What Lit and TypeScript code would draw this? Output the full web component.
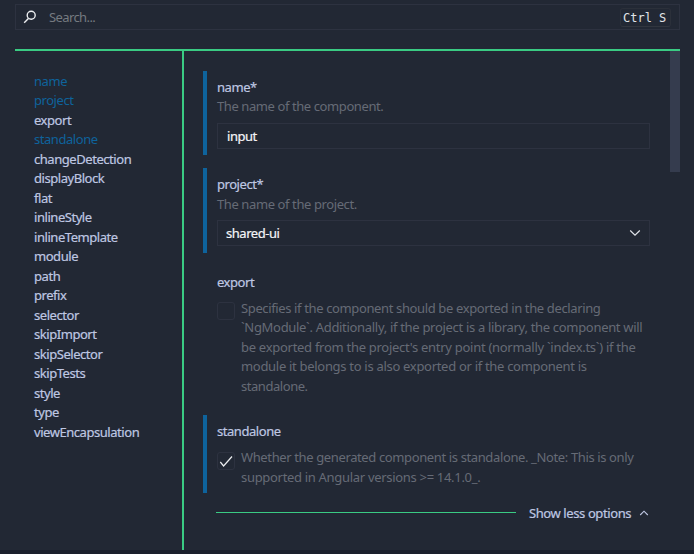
import { LitElement, html, css, svg } from "lit";
import { customElement, property } from "lit/decorators.js";
import { classMap } from "lit/directives/class-map.js";

interface NavItem {
  label: string;
  changed?: boolean;
}

const NAV: NavItem[] = [
  { label: "name", changed: true },
  { label: "project", changed: true },
  { label: "export" },
  { label: "standalone", changed: true },
  { label: "changeDetection" },
  { label: "displayBlock" },
  { label: "flat" },
  { label: "inlineStyle" },
  { label: "inlineTemplate" },
  { label: "module" },
  { label: "path" },
  { label: "prefix" },
  { label: "selector" },
  { label: "skipImport" },
  { label: "skipSelector" },
  { label: "skipTests" },
  { label: "style" },
  { label: "type" },
  { label: "viewEncapsulation" },
];

interface Line {
  text: string;
  spacing: number;
}

const lines = (items: Line[]) =>
  items.map((l) => html`<div class="line" style="letter-spacing:${l.spacing}px">${l.text}</div>`);

@customElement("option-field")
export class OptionField extends LitElement {
  @property() label = "";
  @property({ type: Boolean }) changed = false;

  static styles = css`
    :host {
      display: block;
      margin-bottom: 13px;
    }
    .field {
      padding: 7.4px 0 6.5px 10px;
      border-left: 4px solid transparent;
    }
    .changed {
      border-left-color: #0e639c;
    }
    .label {
      height: 19.5px;
      color: #bfc7e2;
      white-space: nowrap;
      -webkit-text-stroke: 0.2px;
    }
  `;

  render() {
    return html`<div class=${classMap({ field: true, changed: this.changed })}>
      <div class="label">${this.label}</div>
      <slot></slot>
    </div>`;
  }
}

@customElement("app-root")
export class AppRoot extends LitElement {
  static styles = css`
    :host {
      display: block;
      height: 554px;
      overflow: hidden;
      background: #222834;
      color: #bfc7e2;
      font: 13px/19.5px "Noto Sans", "Open Sans", sans-serif;
      letter-spacing: -0.45px;
    }
    .page {
      box-sizing: border-box;
      height: 554px;
      padding: 4px 14px 0 15px;
      display: flex;
      flex-direction: column;
      border-bottom: 4px solid #1b202c;
    }
    .search {
      box-sizing: border-box;
      height: 26px;
      margin-bottom: 19px;
      border: 1px solid #2d3240;
      display: flex;
      align-items: center;
      padding: 0 8px 0 7px;
      flex: none;
    }
    .search-icon {
      width: 14px;
      height: 14px;
      margin-right: 12px;
    }
    .placeholder {
      flex: 1;
      padding-top: 1px;
      color: #757a80;
      letter-spacing: -0.6px;
    }
    .kbd {
      box-sizing: border-box;
      width: 51px;
      height: 19px;
      border: 1px solid #2b303a;
      border-bottom-color: #31363f;
      border-radius: 3px;
      color: #e0e4e8;
      font: 12px/18px "DejaVu Sans Mono", monospace;
      letter-spacing: 0;
      padding-left: 2px;
      white-space: pre;
    }
    .body {
      flex: 1;
      min-height: 0;
      display: flex;
      border-top: 2px solid #3acb83;
    }
    .nav {
      box-sizing: border-box;
      width: 169px;
      flex: none;
      padding: 20.6px 0 0 19px;
      border-right: 2px solid #3acb83;
    }
    .nav-item {
      height: 19.5px;
      white-space: nowrap;
      -webkit-text-stroke: 0.2px;
    }
    .nav-item.changed {
      color: #0e639c;
      -webkit-text-stroke: 0;
    }
    .main {
      flex: 1;
      padding: 19.6px 20px 0 19px;
    }
    .thumb {
      width: 10px;
      height: 121px;
      background: #353c4e;
    }
    .desc,
    .desc-lines {
      color: #666b76;
    }
    .line {
      height: 19.5px;
      white-space: nowrap;
    }
    .control {
      box-sizing: border-box;
      height: 26px;
      margin-top: 5.6px;
      padding: 0 8px 0 9px;
      border: 1px solid #2d3240;
      color: #f4f5f8;
      display: flex;
      align-items: center;
      justify-content: space-between;
      -webkit-text-stroke: 0.2px;
    }
    .value {
      padding-top: 2px;
    }
    .select {
      padding-left: 8px;
    }
    .check-row {
      display: flex;
      gap: 6px;
      margin: 6.2px 0 -0.6px;
    }
    .box {
      box-sizing: border-box;
      width: 18px;
      height: 18px;
      margin-top: 3.4px;
      border: 1px solid #2d3240;
      border-radius: 3px;
      flex: none;
    }
    .box svg {
      display: block;
    }
    .more {
      display: flex;
      align-items: center;
      height: 20px;
      margin: -3.5px 1px 0 13px;
    }
    .rule {
      width: 300px;
      height: 1px;
      background: #3acb83;
      margin-right: 13px;
    }
    .more-label {
      width: 102px;
      margin-right: 8px;
      padding-top: 2px;
      white-space: nowrap;
      letter-spacing: -0.4px;
      -webkit-text-stroke: 0.2px;
    }
  `;

  render() {
    return html`<div class="page">
      <div class="search">
        <svg class="search-icon" viewBox="0 0 14 14" fill="none" stroke="#eceef0" stroke-width="1.4">
          ${svg`<circle cx="8.2" cy="5.3" r="4"/><path d="M5.4 8.4 1.2 12.8"/>`}
        </svg>
        <span class="placeholder">Search...</span>
        <span class="kbd">Ctrl S</span>
      </div>
      <div class="body">
        <nav class="nav">
          ${NAV.map(
            (n) => html`<div class=${classMap({ "nav-item": true, changed: !!n.changed })}>${n.label}</div>`
          )}
        </nav>
        <main class="main">
          <option-field label="name*" changed>
            <div class="desc">${lines([{ text: "The name of the component.", spacing: -0.41 }])}</div>
            <div class="control"><span class="value">input</span></div>
          </option-field>
          <option-field label="project*" changed>
            <div class="desc">${lines([{ text: "The name of the project.", spacing: -0.4 }])}</div>
            <div class="control select">
              <span class="value">shared-ui</span>
              <svg width="12" height="8" viewBox="0 0 12 8" fill="none" stroke="#dfe2e8" stroke-width="1.2">
                <path d="M1.2 1.5 6 6.2 10.8 1.5" />
              </svg>
            </div>
          </option-field>
          <option-field label="export">
            <div class="check-row">
              <div class="box"></div>
              <div class="desc-lines">
                ${lines([
                  { text: "Specifies if the component should be exported in the declaring", spacing: -0.37 },
                  { text: "`NgModule`. Additionally, if the project is a library, the component will", spacing: -0.31 },
                  { text: "be exported from the project's entry point (normally `index.ts`) if the", spacing: -0.28 },
                  { text: "module it belongs to is also exported or if the component is", spacing: -0.3 },
                  { text: "standalone.", spacing: -0.45 },
                ])}
              </div>
            </div>
          </option-field>
          <option-field label="standalone" changed>
            <div class="check-row">
              <div class="box">
                <svg width="16" height="16" viewBox="0 0 16 16" fill="none" stroke="#eceef0" stroke-width="1.2">
                  <path d="M2.3 9 5.6 13 14 3.5" />
                </svg>
              </div>
              <div class="desc-lines">
                ${lines([
                  { text: "Whether the generated component is standalone. _Note: This is only", spacing: -0.375 },
                  { text: "supported in Angular versions >= 14.1.0_.", spacing: -0.31 },
                ])}
              </div>
            </div>
          </option-field>
          <div class="more">
            <div class="rule"></div>
            <span class="more-label">Show less options</span>
            <svg width="10" height="6" viewBox="0 0 10 6" fill="none" stroke="#bfc7e2" stroke-width="1.1">
              <path d="M1.2 5 5 1.2 8.8 5" />
            </svg>
          </div>
        </main>
        <div class="thumb"></div>
      </div>
    </div>`;
  }
}
